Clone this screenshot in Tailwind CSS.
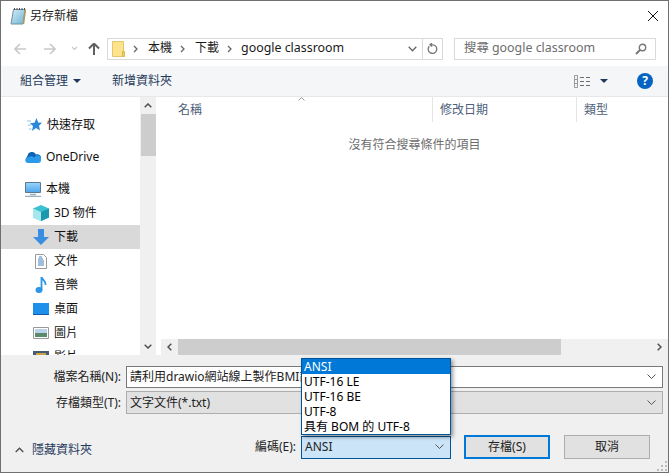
<!DOCTYPE html>
<html lang="zh-Hant">
<head>
  <meta charset="UTF-8" />
  <title>另存新檔</title>
  <script src="https://cdn.jsdelivr.net/npm/@tailwindcss/browser@4"></script>
</head>
<body class="bg-white">
  <div class="relative flex flex-col w-[669px] h-[473px] overflow-hidden bg-white border border-[#6f6f6f] text-[12px] leading-[16px] text-black font-['Noto_Sans','Noto_Sans_CJK_TC',sans-serif]">

    <!-- Title bar -->
    <div class="flex items-center h-[30px] shrink-0 pl-[9px] pr-[5px]">
      <svg width="16" height="17" viewBox="0 0 16 17" class="mr-[4px]">
        <defs><linearGradient id="pad" x1="0" y1="0" x2="1" y2="1"><stop offset="0" stop-color="#d4ecf7"/><stop offset="1" stop-color="#6fb3d6"/></linearGradient></defs>
        <path d="M3.500 1.500h11.500L13 16H1z" fill="url(#pad)" stroke="#6d8ea0"/>
        <path d="M13.500 16L15.500 1.500" stroke="#b89a58" stroke-width="1.500"/>
        <path d="M4.500 2v-2M7 2v-2M9.500 2v-2M12 2v-2M14.500 2v-2" stroke="#4d4d4d"/>
      </svg>
      <span class="text-[#222]">另存新檔</span>
      <svg width="10" height="10" viewBox="0 0 10 10" class="ml-auto mr-[5px] mb-[1px]">
        <path d="M0 0l10 10M10 0L0 10" stroke="#111" stroke-width="1"/>
      </svg>
    </div>

    <!-- Address row -->
    <div class="flex items-center h-[35px] shrink-0 pl-[13px]">
      <svg width="12" height="12" viewBox="0 0 12 12" class="mr-[18px]"><path d="M6 1L1 6l5 5M1 6h11" fill="none" stroke="#c9c9c9" stroke-width="1.600"/></svg>
      <svg width="12" height="12" viewBox="0 0 12 12" class="mr-[15px]"><path d="M6 1l5 5-5 5M11 6H0" fill="none" stroke="#c9c9c9" stroke-width="1.600"/></svg>
      <svg width="7" height="5" viewBox="0 0 7 5" class="mr-[10px]"><path d="M1 1l2.500 2.500L6 1" fill="none" stroke="#c9c9c9" stroke-width="1.200"/></svg>
      <svg width="12" height="13" viewBox="0 0 12 13" class="mr-[7px]"><path d="M6 1.500L1 6.500M6 1.500l5 5M6 1.500V13" fill="none" stroke="#5f5f5f" stroke-width="2"/></svg>
      <div class="flex items-center w-[336px] h-[22px] border border-[#d9d9d9] pl-[4px] text-[#1a1a1a]">
        <svg width="13" height="16" viewBox="0 0 13 16" class="mr-[8px]"><path d="M.500.500h11v15H.500z" fill="#fde38b" stroke="#e5c76b"/><path d="M10.500 10.500h2v5h-2z" fill="#f6cf5d" stroke="#dcb64e"/></svg>
        <svg width="5" height="8" viewBox="0 0 5 8" class="mr-[10px]"><path d="M1 1l3 3-3 3" fill="none" stroke="#666" stroke-width="1.300"/></svg>
        <span class="mb-[1px]">本機</span>
        <svg width="5" height="8" viewBox="0 0 5 8" class="ml-[8px] mr-[10px]"><path d="M1 1l3 3-3 3" fill="none" stroke="#666" stroke-width="1.300"/></svg>
        <span class="mb-[1px]">下載</span>
        <svg width="5" height="8" viewBox="0 0 5 8" class="ml-[8px] mr-[9px]"><path d="M1 1l3 3-3 3" fill="none" stroke="#666" stroke-width="1.300"/></svg>
        <span class="mb-[1px] text-[12.400px]">google classroom</span>
        <svg width="9" height="6" viewBox="0 0 9 6" class="ml-auto mr-[5px]"><path d="M.700.700l3.800 4 3.800-4" fill="none" stroke="#666" stroke-width="1.300"/></svg>
        <div class="flex items-center justify-center w-[20px] h-full border-l border-[#d9d9d9]">
          <svg width="11" height="12" viewBox="0 0 11 12"><path d="M2.300 3.200a4.300 4.300 0 1 0 3.200-1.400H3M5 0L3 1.800l2 1.800" fill="none" stroke="#777" stroke-width="1.300"/></svg>
        </div>
      </div>
      <div class="flex items-center w-[202px] h-[22px] ml-[11px] border border-[#d9d9d9] pl-[9px] pr-[8px] text-[#6d6d6d]">
        <span class="mb-[1px] text-[12.400px]">搜尋 google classroom</span>
        <svg width="12" height="12" viewBox="0 0 12 12" class="ml-auto"><circle cx="7.500" cy="4.500" r="3.200" fill="none" stroke="#777" stroke-width="1.400"/><path d="M5 7l-4 4" stroke="#777" stroke-width="2"/></svg>
      </div>
    </div>

    <!-- Toolbar -->
    <div class="flex items-center h-[31px] shrink-0 bg-[#f5f6f7] border-b border-[#e8e8e8] pl-[19px] pr-[14px] text-[#1e395b]">
      <span>組合管理</span>
      <svg width="8" height="4" viewBox="0 0 8 4" class="ml-[5px]"><path d="M0 0h8L4 4z" fill="#1e395b"/></svg>
      <span class="ml-[31px]">新增資料夾</span>
      <svg width="16" height="13" viewBox="0 0 16 13" class="ml-auto"><path d="M.500.500h3v12h-3zM.500 4.500h3M.500 8.500h3" fill="none" stroke="#9a9a9a"/><path d="M6 2.500h4M12 2.500h4M6 6.500h4M12 6.500h4M6 10.500h4M12 10.500h4" stroke="#6d6d6d"/></svg>
      <svg width="8" height="4" viewBox="0 0 8 4" class="ml-[10px]"><path d="M0 0h8L4 4z" fill="#1e395b"/></svg>
      <div class="flex items-center justify-center w-[16px] h-[16px] ml-[29px] mr-[1px] rounded-full bg-[#0563c1] text-white text-[12px] font-bold">?</div>
    </div>

    <!-- Main area -->
    <div class="flex h-[258px] shrink-0 overflow-hidden">
      <!-- Sidebar -->
      <div class="w-[139px] shrink-0 flex flex-col pt-[16px] overflow-hidden text-[#111]">
        <div class="flex items-center h-[24px] shrink-0 pl-[26px] gap-[5px]">
          <svg width="15" height="14" viewBox="0 0 15 14"><path d="M9.500 0l1.700 4.600 3.800.2-3 3 1 4.700-4-2.500-4 3 1-5-3-2.800 4.500-.5z" fill="#2b88d8"/><path d="M0 3h4M1 7h3M2 11h2.500" stroke="#8cc4ee"/></svg>
          <span>快速存取</span>
        </div>
        <div class="flex items-center h-[24px] shrink-0 pl-[24px] mt-[8px] gap-[5px]">
          <svg width="16" height="11" viewBox="0 0 16 11"><path d="M3 9a3 3 0 0 1-.500-5 4.500 4.500 0 0 1 8.500-1.500A3.800 3.800 0 0 1 16 7a3 3 0 0 1-3 2z" fill="#0f62b4"/><path d="M3 11a2.800 2.800 0 0 1-1-5.400L6.500 4l3 1.500A3 3 0 0 1 16 8a3 3 0 0 1-3 3z" fill="#2b9ae8"/></svg>
          <span>OneDrive</span>
        </div>
        <div class="flex items-center h-[24px] shrink-0 pl-[24px] mt-[8px] gap-[5px]">
          <svg width="16" height="15" viewBox="0 0 16 15"><defs><linearGradient id="screen" x1="0" y1="0" x2="0" y2="1"><stop offset="0" stop-color="#9bd6fb"/><stop offset="1" stop-color="#4da6ec"/></linearGradient></defs><path d="M.500.500h15v10H.500z" fill="url(#screen)" stroke="#5a7a92"/><path d="M5 12.500h6M0 14.500h16" stroke="#9ab0c0" stroke-width="1.500"/></svg>
          <span>本機</span>
        </div>
        <div class="flex items-center h-[24px] shrink-0 pl-[32px] gap-[5px]">
          <svg width="16" height="16" viewBox="0 0 16 16"><path d="M8 0l8 3.500v9L8 16l-8-3.500v-9z" fill="#3cc0d0"/><path d="M8 7v9l-8-3.500v-9z" fill="#a7e8ec"/><path d="M8 7v9l8-3.500v-9z" fill="#1b97ae"/></svg>
          <span>3D 物件</span>
        </div>
        <div class="flex items-center h-[24px] shrink-0 pl-[32px] gap-[5px] bg-[#d9d9d9]">
          <svg width="16" height="16" viewBox="0 0 16 16"><path d="M5 0h6v8h5l-8 8-8-8h5z" fill="#3a8ee0"/></svg>
          <span>下載</span>
        </div>
        <div class="flex items-center h-[24px] shrink-0 pl-[34px] gap-[7px]">
          <svg width="12" height="15" viewBox="0 0 12 15"><path d="M.500.500h8l3 3v11h-11z" fill="#fff" stroke="#9a9a9a"/><path d="M4 3h3M3 5h5M3 7h6M3 9h6M3 11h6" stroke="#3e7fb8"/></svg>
          <span>文件</span>
        </div>
        <div class="flex items-center h-[24px] shrink-0 pl-[34px] gap-[7px]">
          <svg width="12" height="16" viewBox="0 0 12 16"><ellipse cx="4" cy="13" rx="3.500" ry="3" fill="#2b95e8"/><path d="M6.500 13V0c1 3 4.500 4 4 8" fill="none" stroke="#2b95e8" stroke-width="1.800"/></svg>
          <span>音樂</span>
        </div>
        <div class="flex items-center h-[24px] shrink-0 pl-[32px] gap-[5px]">
          <svg width="16" height="12" viewBox="0 0 16 12"><path d="M0 0h16v11H0z" fill="#1e90ea"/><path d="M0 11h16v1H0z" fill="#0d5ea6"/></svg>
          <span>桌面</span>
        </div>
        <div class="flex items-center h-[24px] shrink-0 pl-[32px] gap-[5px]">
          <svg width="16" height="12" viewBox="0 0 16 12"><path d="M.500.500h15v11H.500z" fill="#fff" stroke="#9a9a9a"/><path d="M2 2h12v4H2z" fill="#b9d3e8"/><path d="M2 6h12v4H2z" fill="#5d8a6a"/></svg>
          <span>圖片</span>
        </div>
        <div class="flex items-center h-[24px] shrink-0 pl-[32px] gap-[5px]">
          <svg width="16" height="12" viewBox="0 0 16 12"><path d="M0 0h16v12H0z" fill="#465a78"/><path d="M3 2h10v8H3z" fill="#c7a642"/></svg>
          <span>影片</span>
        </div>
      </div>

      <!-- Sidebar scrollbar -->
      <div class="flex flex-col w-[16px] shrink-0 bg-[#f0f0f0]">
        <div class="flex items-center justify-center h-[17px]">
          <svg width="8" height="5" viewBox="0 0 8 5"><path d="M.700 4.300L4 1l3.300 3.300" fill="none" stroke="#505050" stroke-width="1.500"/></svg>
        </div>
        <div class="h-[42px] ml-[1px] bg-[#cdcdcd]"></div>
        <div class="flex items-center justify-center h-[17px] mt-auto">
          <svg width="8" height="5" viewBox="0 0 8 5"><path d="M.700.700L4 4l3.300-3.300" fill="none" stroke="#505050" stroke-width="1.500"/></svg>
        </div>
      </div>

      <!-- File list -->
      <div class="flex flex-col flex-1 ml-[5px] min-w-0">
        <div class="relative flex h-[25px] shrink-0 text-[#4c607a]">
          <svg width="7" height="4" viewBox="0 0 7 4" class="absolute left-[137px] top-[0px]"><path d="M.500 3.500L3.500.500l3 3" fill="none" stroke="#9a9a9a"/></svg>
          <div class="w-[272px] pl-[17px] pt-[5px] border-r border-[#e5e5e5]">名稱</div>
          <div class="w-[144px] pl-[7px] pt-[5px] border-r border-[#e5e5e5]">修改日期</div>
          <div class="pl-[7px] pt-[5px]">類型</div>
        </div>
        <div class="flex-1 text-center pt-[15px] text-[#6d6d6d]">沒有符合搜尋條件的項目</div>
        <!-- Horizontal scrollbar -->
        <div class="flex items-center h-[16px] shrink-0 bg-[#f0f0f0]">
          <div class="flex items-center justify-center w-[17px] h-full">
            <svg width="5" height="8" viewBox="0 0 5 8"><path d="M4.300.700L1 4l3.300 3.300" fill="none" stroke="#505050" stroke-width="1.500"/></svg>
          </div>
          <div class="w-[383px] h-full bg-[#cdcdcd]"></div>
          <div class="flex items-center justify-center w-[17px] h-full ml-auto">
            <svg width="5" height="8" viewBox="0 0 5 8"><path d="M.700.700L4 4 .700 7.300" fill="none" stroke="#505050" stroke-width="1.500"/></svg>
          </div>
        </div>
      </div>
    </div>

    <!-- Footer -->
    <div class="relative flex flex-col flex-1 bg-[#f0f0f0] pt-[11px] text-[#222]">
      <div class="flex items-center h-[22px]">
        <label class="w-[120px] text-right">檔案名稱(N):</label>
        <div class="flex items-center flex-1 h-[22px] ml-[5px] mr-[5px] pl-[3px] pr-[6px] bg-white border border-[#7a7a7a] overflow-hidden">
          <span class="whitespace-nowrap">請利用drawio網站線上製作BMI計算</span>
          <svg width="9" height="6" viewBox="0 0 9 6" class="ml-auto shrink-0"><path d="M.500.500l4 4 4-4" fill="none" stroke="#555"/></svg>
        </div>
      </div>
      <div class="flex items-center h-[23px] mt-[3px]">
        <label class="w-[120px] text-right">存檔類型(T):</label>
        <div class="flex items-center flex-1 h-[23px] ml-[5px] mr-[5px] pl-[3px] pr-[6px] bg-[#e1e1e1] border border-[#adadad]">
          <span>文字文件(*.txt)</span>
          <svg width="9" height="6" viewBox="0 0 9 6" class="ml-auto"><path d="M.500.500l4 4 4-4" fill="none" stroke="#555"/></svg>
        </div>
      </div>
      <div class="flex items-center h-[24px] mt-[21px]">
        <div class="flex items-center w-[254px] pl-[14px] pt-[6px]">
          <svg width="9" height="6" viewBox="0 0 9 6" class="mr-[8px]"><path d="M.700 5L4.500 1.200 8.300 5" fill="none" stroke="#505050" stroke-width="1.400"/></svg>
          <span class="text-[#1e395b]">隱藏資料夾</span>
        </div>
        <label class="w-[45px]">編碼(E):</label>
        <div class="flex items-center w-[150px] h-[23px] ml-[1px] pl-[3px] pr-[6px] bg-[#cce4f7] border border-[#005499]">
          <span>ANSI</span>
          <svg width="9" height="6" viewBox="0 0 9 6" class="ml-auto"><path d="M.500.500l4 4 4-4" fill="none" stroke="#555"/></svg>
        </div>
        <button class="w-[86px] h-[24px] ml-[13px] bg-[#e1e1e1] border-2 border-[#0078d7]">存檔(S)</button>
        <button class="w-[86px] h-[24px] ml-[14px] bg-[#e1e1e1] border border-[#adadad]">取消</button>
      </div>

      <!-- Open encoding dropdown -->
      <div class="absolute left-[300px] top-[3px] w-[150px] bg-white border border-[#005499] shadow-[2px_2px_4px_rgba(0,0,0,0.4)] leading-[15px]">
        <div class="h-[15px] pl-[2px] bg-[#0078d7] text-white">ANSI</div>
        <div class="h-[15px] pl-[2px] text-black">UTF-16 LE</div>
        <div class="h-[15px] pl-[2px] text-black">UTF-16 BE</div>
        <div class="h-[15px] pl-[2px] text-black">UTF-8</div>
        <div class="h-[15px] pl-[2px] text-black">具有 BOM 的 UTF-8</div>
      </div>

      <!-- Resize grip -->
      <svg width="10" height="10" viewBox="0 0 10 10" class="absolute right-[1px] bottom-[1px]"><path d="M8 0h2v2H8zM4 4h2v2H4zM8 4h2v2H8zM0 8h2v2H0zM4 8h2v2H4zM8 8h2v2H8z" fill="#bdbdbd"/></svg>
    </div>
  </div>
</body>
</html>
